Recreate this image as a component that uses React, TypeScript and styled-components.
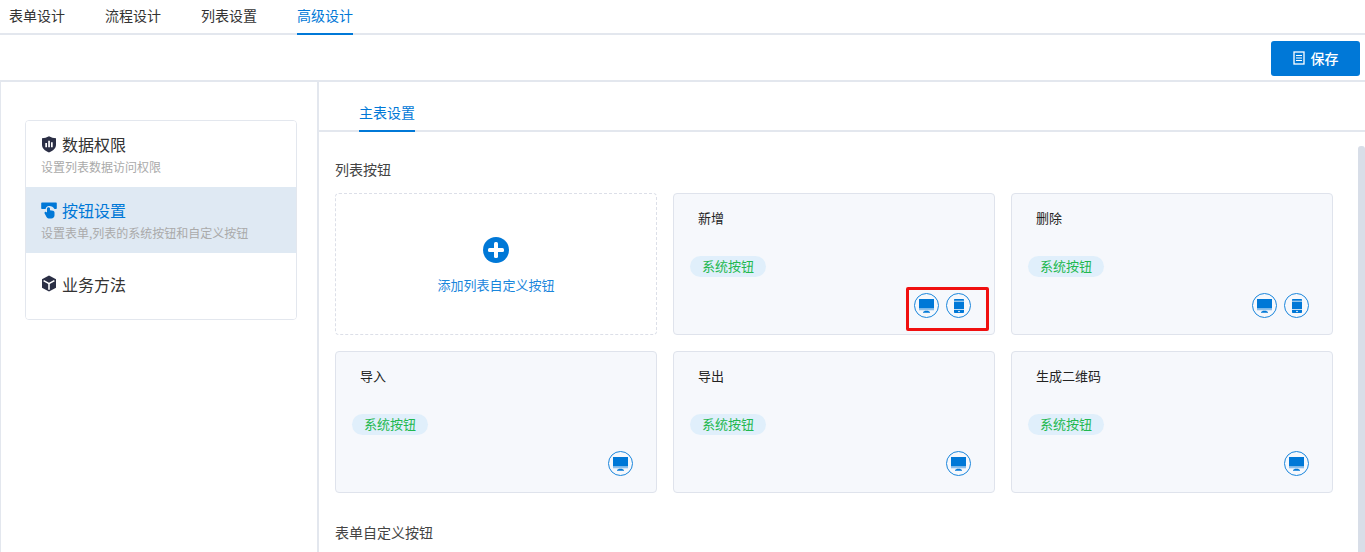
import React from 'react';
import styled, { createGlobalStyle } from 'styled-components';

const BLUE = '#0078d7';
const LINE = '#e3e7ee';

const GlobalStyle = createGlobalStyle`
  html, body {
    margin: 0;
    height: 100%;
    overflow: hidden;
    background: #fff;
    font-family: "Noto Sans CJK SC", "Liberation Sans", sans-serif;
    color: #333;
  }
  * { box-sizing: border-box; }
`;

const DesktopIcon = () => (
  <svg width="17" height="16" viewBox="0 0 17 16" fill={BLUE}>
    <rect x="1" y="1" width="15" height="9.500" />
    <rect x="1" y="11" width="15" height="1.300" fill="#8fbfea" />
    <path d="M5 14.800h7v-.8L10 12.800H7L5 14z" />
  </svg>
);

const MobileIcon = () => (
  <svg width="16" height="16" viewBox="0 0 16 16" fill={BLUE}>
    <path d="M4 1h8c.6 0 1 .4 1 1v.8H3V2c0-.6.4-1 1-1z" />
    <rect x="3" y="3.600" width="10" height="7.600" />
    <path d="M3 12h10v2c0 .6-.4 1-1 1H4c-.6 0-1-.4-1-1z" />
    <rect x="7.200" y="12.900" width="1.600" height="1.200" fill="#f6f8fc" />
  </svg>
);

const ChartShield = () => (
  <svg width="16" height="17" viewBox="0 0 16 17">
    <path d="M8 .3c2.200 1.300 4.500 1.800 7 2v6.500c0 3.500-2.800 6-7 7.800-4.200-1.800-7-4.300-7-7.800V2.300c2.500-.2 4.800-.7 7-2z" fill="#2b2f45" />
    <path d="M4.300 7h1.700v4.300H4.300zM7.200 4.800h1.700v6.500H7.200zM10 6.300h1.700v5H10z" fill="#fff" />
  </svg>
);

const HandIcon = () => (
  <svg width="16" height="17" viewBox="0 0 16 17" fill={BLUE}>
    <path d="M1.200 .5h13.600c.6 0 1 .4 1 1v4.500c0 .6-.4 1-1 1h-1.300C12.300 5 10.200 3.900 7.800 4.100 6 4.300 5 5.400 4.600 7H1.200c-.6 0-1-.4-1-1V1.500c0-.6.4-1 1-1z" />
    <path d="M6 6.700c0-1 .7-1.500 1.500-1.500S9 5.700 9 6.700v1.500l3 .6c1 .2 1.500 1 1.500 2v2.500c0 1.900-1.300 3.200-3.200 3.200H8.500c-1.300 0-2.200-.5-3-1.500l-1.700-3.300c-.5-.7-.3-1.400.2-1.800.6-.4 1.200-.2 2 .5z" />
  </svg>
);

const CubeIcon = () => (
  <svg width="16" height="17" viewBox="0 0 16 17">
    <path d="M8 .4l7 3.900v8.400l-7 3.900-7-3.900V4.300z" fill="#2b2f45" />
    <path d="M3 5l5 2.700L13 5l.8 1.300-5 2.800v5.700H7.200V9.100l-5-2.800z" fill="#fff" />
  </svg>
);

const PlusIcon = () => (
  <svg width="26" height="26" viewBox="0 0 26 26">
    <circle cx="13" cy="13" r="13" fill={BLUE} />
    <rect x="5" y="11" width="16" height="4" rx="1.500" fill="#fff" />
    <rect x="11" y="5" width="4" height="16" rx="1.500" fill="#fff" />
  </svg>
);

const SaveIcon = () => (
  <svg width="12" height="14" viewBox="0 0 12 14" fill="none" stroke="#fff">
    <rect x="1" y="1" width="10" height="12" strokeWidth="1.300" />
    <path d="M3 4.500h6M3 7h6M3 9.500h6" strokeWidth="1.100" />
  </svg>
);

const topTabs = ['表单设计', '流程设计', '列表设置', '高级设计'];

const menu = [
  { icon: <ChartShield />, title: '数据权限', desc: '设置列表数据访问权限' },
  { icon: <HandIcon />, title: '按钮设置', desc: '设置表单,列表的系统按钮和自定义按钮', active: true },
  { icon: <CubeIcon />, title: '业务方法' },
];

const buttons = [
  { name: '新增', mobile: true, marked: true },
  { name: '删除', mobile: true },
  { name: '导入' },
  { name: '导出' },
  { name: '生成二维码' },
];

const App: React.FC = () => {
  return (
    <Wrapper>
      <GlobalStyle />
      <TopTabs>
        {topTabs.map((tab, index) => (
          <TopTab key={tab} $active={index === 3}>{tab}</TopTab>
        ))}
      </TopTabs>
      <Toolbar>
        <SaveButton>
          <SaveIcon />
          保存
        </SaveButton>
      </Toolbar>
      <Body>
        <Sidebar>
          <Menu>
            {menu.map(item => (
              <MenuItem key={item.title} $active={item.active} $solo={!item.desc}>
                <MenuTitle $active={item.active}>
                  {item.icon}
                  {item.title}
                </MenuTitle>
                {item.desc && <MenuDesc>{item.desc}</MenuDesc>}
              </MenuItem>
            ))}
          </Menu>
        </Sidebar>
        <Main>
          <SubTabs>
            <SubTab>主表设置</SubTab>
          </SubTabs>
          <Content>
            <SectionTitle>列表按钮</SectionTitle>
            <Grid>
              <AddCard>
                <PlusIcon />
                <AddLabel>添加列表自定义按钮</AddLabel>
              </AddCard>
              {buttons.map(button => (
                <Card key={button.name}>
                  <CardName>{button.name}</CardName>
                  <Badge>系统按钮</Badge>
                  <CardIcons>
                    <IconCircle><DesktopIcon /></IconCircle>
                    {button.mobile && <IconCircle><MobileIcon /></IconCircle>}
                  </CardIcons>
                  {button.marked && <Marker />}
                </Card>
              ))}
            </Grid>
            <FormSectionTitle>表单自定义按钮</FormSectionTitle>
          </Content>
          <ScrollThumb />
        </Main>
      </Body>
    </Wrapper>
  );
};

const Wrapper = styled.div`
  display: flex;
  flex-direction: column;
  width: 1365px;
  height: 552px;
  overflow: hidden;
`;

const TopTabs = styled.div`
  display: flex;
  gap: 40px;
  height: 35px;
  padding-left: 9px;
  border-bottom: 2px solid ${LINE};
`;

const TopTab = styled.div<{ $active?: boolean }>`
  height: 35px;
  line-height: 31px;
  font-size: 14px;
  color: ${p => (p.$active ? BLUE : '#333')};
  border-bottom: 2px solid ${p => (p.$active ? BLUE : 'transparent')};
`;

const Toolbar = styled.div`
  display: flex;
  justify-content: flex-end;
  align-items: flex-start;
  height: 47px;
  padding: 6px 5px 0 0;
  border-bottom: 2px solid ${LINE};
`;

const SaveButton = styled.button`
  display: flex;
  align-items: center;
  justify-content: center;
  gap: 6px;
  width: 89px;
  height: 35px;
  padding: 0 0 2px;
  border: 0;
  border-radius: 3px;
  background: ${BLUE};
  color: #fff;
  font-family: inherit;
  font-size: 14px;
  font-weight: 500;
`;

const Body = styled.div`
  display: flex;
  flex: 1;
  min-height: 0;
`;

const Sidebar = styled.aside`
  width: 319px;
  padding: 38px 20px 0 24px;
  border-left: 1px solid ${LINE};
  border-right: 2px solid ${LINE};
`;

const Menu = styled.div`
  width: 272px;
  height: 200px;
  border: 1px solid ${LINE};
  border-radius: 4px;
  overflow: hidden;
`;

const MenuItem = styled.div<{ $active?: boolean; $solo?: boolean }>`
  display: flex;
  flex-direction: column;
  justify-content: center;
  gap: 2px;
  height: 66px;
  padding: 0 0 ${p => (p.$solo ? '5px' : '0')} 15px;
  background: ${p => (p.$active ? '#dfe9f3' : '#fff')};
`;

const MenuTitle = styled.div<{ $active?: boolean }>`
  display: flex;
  align-items: center;
  gap: 5px;
  height: 24px;
  font-size: 16px;
  color: ${p => (p.$active ? BLUE : '#333')};
`;

const MenuDesc = styled.div`
  font-size: 12px;
  line-height: 18px;
  color: #aaa;
  white-space: nowrap;
`;

const Main = styled.main`
  position: relative;
  flex: 1;
  min-width: 0;
`;

const SubTabs = styled.div`
  display: flex;
  height: 50px;
  padding-left: 40px;
  border-bottom: 2px solid ${LINE};
`;

const SubTab = styled.div`
  height: 50px;
  padding-top: 20px;
  line-height: 20px;
  font-size: 14px;
  color: ${BLUE};
  border-bottom: 2px solid ${BLUE};
`;

const Content = styled.div`
  padding: 27px 0 0 16px;
`;

const SectionTitle = styled.div`
  height: 20px;
  line-height: 20px;
  font-size: 14px;
  color: #444;
`;

const FormSectionTitle = styled(SectionTitle)`
  margin-top: 29px;
`;

const Grid = styled.div`
  display: grid;
  grid-template-columns: repeat(3, 322px);
  grid-auto-rows: 142px;
  gap: 16px;
  margin-top: 14px;
`;

const AddCard = styled.div`
  display: flex;
  flex-direction: column;
  align-items: center;
  padding-top: 43px;
  border: 1px dashed #dcdfe8;
  border-radius: 4px;
`;

const AddLabel = styled.div`
  margin-top: 12px;
  line-height: 20px;
  font-size: 13px;
  color: #1a86dc;
`;

const Card = styled.div`
  position: relative;
  display: flex;
  flex-direction: column;
  align-items: flex-start;
  padding: 14px 23px 0 16px;
  background: #f6f8fc;
  border: 1px solid #dfe3ec;
  border-radius: 4px;
`;

const CardName = styled.div`
  margin-left: 8px;
  line-height: 20px;
  font-size: 13px;
  color: #222;
`;

const Badge = styled.div`
  margin-top: 28px;
  padding: 0 12px;
  height: 21px;
  line-height: 20px;
  border-radius: 11px;
  background: #e0effb;
  color: #22b84f;
  font-size: 13px;
`;

const CardIcons = styled.div`
  display: flex;
  justify-content: flex-end;
  align-self: flex-end;
  gap: 7px;
  margin-top: 16px;
`;

const IconCircle = styled.div`
  display: flex;
  align-items: center;
  justify-content: center;
  width: 25px;
  height: 25px;
  background: #f6f8fc;
  border: 1px solid #1a86dc;
  border-radius: 50%;
`;

const Marker = styled.div`
  position: absolute;
  right: 5px;
  top: 93px;
  width: 83px;
  height: 44px;
  border: 3px solid #f01010;
  border-radius: 2px;
`;

const ScrollThumb = styled.div`
  position: absolute;
  top: 64px;
  right: 0;
  bottom: 0;
  width: 7px;
  border-radius: 3px 3px 0 0;
  background: #d8dee8;
`;

export default App;
